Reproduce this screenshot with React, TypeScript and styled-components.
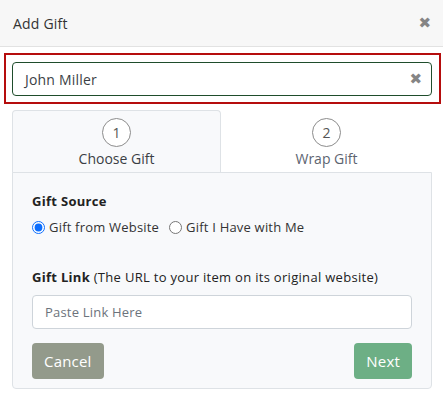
import React from "react";
import styled, { createGlobalStyle } from "styled-components";

const Global = createGlobalStyle`
  html, body { margin: 0; padding: 0; background: #ffffff; }
  body { font-family: "Open Sans", "Liberation Sans", sans-serif; color: #212529; }
  * { box-sizing: border-box; }
`;

const Page = styled.div`
  width: 443px;
  display: flex;
  flex-direction: column;
`;

const Header = styled.div`
  height: 47px;
  background: #f7f7f7;
  border-bottom: 1px solid #e2e2e2;
  display: flex;
  align-items: center;
  justify-content: space-between;
  padding: 0 12px 0 13px;
`;

const Title = styled.div`
  font-size: 14px;
  color: #333;
  letter-spacing: 0.2px;
`;

const CloseX = styled.span<{ $size?: number }>`
  font-family: "DejaVu Sans", sans-serif;
  font-size: ${(p) => p.$size ?? 12}px;
  color: #858585;
  line-height: 1;
`;

const Highlight = styled.div`
  margin: 6px 2px 0 4px;
  border: 2px solid #b50d0d;
  padding: 7px 7px 6px 6px;
`;

const NameField = styled.div`
  height: 34px;
  border: 1px solid #1f4d2c;
  border-radius: 4px;
  background: #fff;
  display: flex;
  align-items: center;
  justify-content: space-between;
  padding: 0 9px 0 12px;
`;

const NameText = styled.span`
  font-size: 14px;
  color: #3b3f45;
  letter-spacing: 0.2px;
`;

const Wizard = styled.div`
  margin: 6px 11px 0 12px;
  display: flex;
  flex-direction: column;
`;

const Tabs = styled.div`
  display: grid;
  grid-template-columns: 209px 1fr;
  height: 63px;
`;

const Tab = styled.div<{ $active?: boolean }>`
  display: flex;
  flex-direction: column;
  align-items: center;
  padding-top: 7px;
  gap: 2px;
  background: ${(p) => (p.$active ? "#f8f9fb" : "#fff")};
  border: 1px solid ${(p) => (p.$active ? "#dee2e6" : "transparent")};
  border-bottom: none;
  border-radius: 4px 4px 0 0;
  color: ${(p) => (p.$active ? "#3b3f45" : "#5d6470")};
`;

const StepCircle = styled.div`
  width: 29px;
  height: 29px;
  border-radius: 50%;
  border: 1.5px solid #8c8c8c;
  background: #fff;
  display: flex;
  align-items: center;
  justify-content: center;
  font-size: 14px;
  color: #555;
`;

const TabLabel = styled.div`
  font-size: 14px;
`;

const Panel = styled.div`
  background: #f8f9fb;
  border: 1px solid #dee2e6;
  border-radius: 0 0 4px 4px;
  margin-top: -1px;
  padding: 18px 19px 9px 19px;
  display: flex;
  flex-direction: column;
`;

const SectionLabel = styled.div`
  font-size: 13px;
  font-weight: 700;
  color: #222;
  line-height: 20px;
  letter-spacing: 0.3px;
`;

const Muted = styled.span`
  font-weight: 400;
`;

const RadioRow = styled.div`
  display: flex;
  align-items: center;
  gap: 10px;
  margin-top: 7px;
  font-size: 13px;
  color: #333;
  letter-spacing: 0.2px;
`;

const RadioLabel = styled.label`
  display: flex;
  align-items: center;
  gap: 4px;
`;

const Radio = styled.input`
  margin: 0;
  width: 13px;
  height: 13px;
  accent-color: #0d6efd;
`;

const LinkLabel = styled(SectionLabel)`
  margin-top: 31px;
`;

const LinkInput = styled.input`
  margin-top: 8px;
  height: 34px;
  border: 1px solid #ced4da;
  border-radius: 4px;
  background: #fff;
  padding: 0 12px;
  font-family: inherit;
  font-size: 13px;
  letter-spacing: 0.2px;
  color: #333;
  &::placeholder { color: #6c737c; }
`;

const Actions = styled.div`
  margin-top: 14px;
  display: flex;
  justify-content: space-between;
`;

const Button = styled.button<{ $tone: "muted" | "go" }>`
  height: 36px;
  border: none;
  border-radius: 4px;
  padding: 0 12px;
  font-family: inherit;
  font-size: 15px;
  font-weight: 500;
  letter-spacing: 0.2px;
  color: #fff;
  background: ${(p) => (p.$tone === "go" ? "#6daf85" : "#939a8b")};
`;

export default function App() {
  return (
    <Page>
      <Global />
      <Header>
        <Title>Add Gift</Title>
        <CloseX $size={15}>✖</CloseX>
      </Header>
      <Highlight>
        <NameField>
          <NameText>John Miller</NameText>
          <CloseX $size={15}>✖</CloseX>
        </NameField>
      </Highlight>
      <Wizard>
        <Tabs>
          <Tab $active>
            <StepCircle>1</StepCircle>
            <TabLabel>Choose Gift</TabLabel>
          </Tab>
          <Tab>
            <StepCircle>2</StepCircle>
            <TabLabel>Wrap Gift</TabLabel>
          </Tab>
        </Tabs>
        <Panel>
          <SectionLabel>Gift Source</SectionLabel>
          <RadioRow>
            <RadioLabel>
              <Radio type="radio" name="src" defaultChecked />
              Gift from Website
            </RadioLabel>
            <RadioLabel>
              <Radio type="radio" name="src" />
              Gift I Have with Me
            </RadioLabel>
          </RadioRow>
          <LinkLabel>
            Gift Link <Muted>(The URL to your item on its original website)</Muted>
          </LinkLabel>
          <LinkInput placeholder="Paste Link Here" />
          <Actions>
            <Button $tone="muted">Cancel</Button>
            <Button $tone="go">Next</Button>
          </Actions>
        </Panel>
      </Wizard>
    </Page>
  );
}
